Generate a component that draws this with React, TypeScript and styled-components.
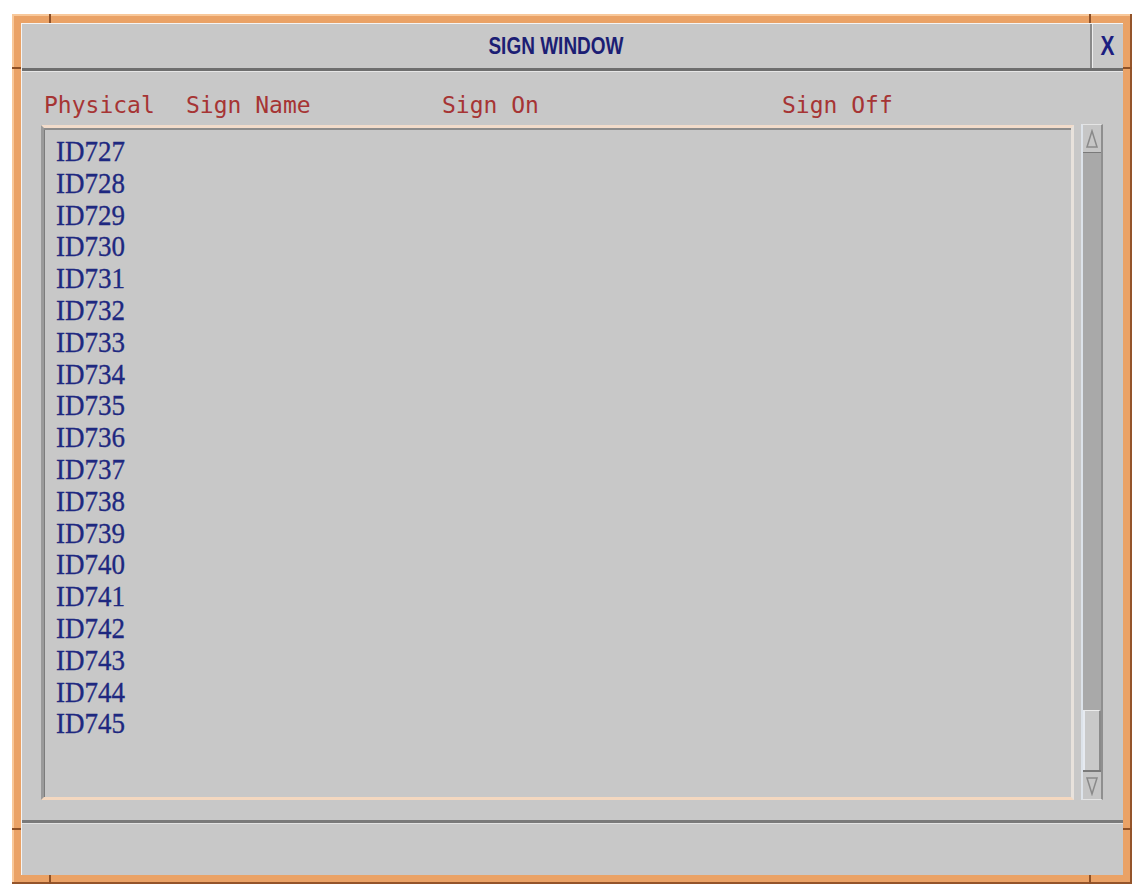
import React from "react";
import styled, { createGlobalStyle } from "styled-components";

const GlobalStyle = createGlobalStyle`
  html, body { margin: 0; padding: 0; background: #ffffff; }
  body { font-family: "Liberation Sans", Arial, sans-serif; }
`;

const Page = styled.div`
  padding: 14px 0 0 12px;
`;

const Frame = styled.div`
  position: relative;
  box-sizing: border-box;
  width: 1120px;
  height: 870px;
  background: #eaa266;
  padding: 9px;
  box-shadow: inset -2px -2px 0 #94542a, inset 2px 2px 0 #f8c89a;
`;

const Tick = styled.div<{ $x?: number; $y?: number; $vertical?: boolean }>`
  position: absolute;
  background: #8e5026;
  ${(p) =>
    p.$vertical
      ? `width: 2px; height: 9px; left: ${p.$x}px; top: ${p.$y}px;`
      : `width: 9px; height: 2px; left: ${p.$x}px; top: ${p.$y}px;`}
`;

const Window = styled.div`
  box-sizing: border-box;
  height: 100%;
  display: flex;
  flex-direction: column;
  background: #c8c8c8;
  border-left: 1px solid #f4f4f4;
  border-top: 1px solid #f4f4f4;
`;

const TitleBar = styled.div`
  display: flex;
  height: 44px;
  border-bottom: 3px solid #6e6e6e;
  box-shadow: 0 1px 0 #e6e6e6;
`;

const Title = styled.div`
  flex: 1;
  display: flex;
  align-items: center;
  justify-content: center;
  font-family: "Liberation Sans", Arial, sans-serif;
  font-weight: bold;
  font-size: 19px;
  color: #1c1e74;
  span { display: inline-block; transform: scaleY(1.3); }
`;

const CloseButton = styled.div`
  width: 31px;
  display: flex;
  align-items: center;
  justify-content: center;
  border-left: 2px solid #8a8a8a;
  box-shadow: inset 1px 0 0 #eeeeee;
  font-family: "Liberation Sans", Arial, sans-serif;
  font-weight: bold;
  font-size: 21px;
  color: #1c1e80;
  span { display: inline-block; transform: scaleY(1.3); }
`;

const Body = styled.div`
  flex: 1;
  display: flex;
  flex-direction: column;
  padding: 0 20px 20px 19px;
`;

const HeaderRow = styled.div`
  display: grid;
  grid-template-columns: 142px 256px 340px 1fr;
  align-items: center;
  height: 40px;
  padding: 14px 0 0 3px;
  font-family: "DejaVu Sans Mono", "Liberation Mono", monospace;
  font-size: 23px;
  color: #a63434;
`;

const HeaderCell = styled.div`
  white-space: pre;
`;

const ListArea = styled.div`
  flex: 1;
  display: flex;
  gap: 7px;
`;

const ListBox = styled.div`
  flex: 1;
  box-sizing: border-box;
  border-top: 3px solid #f2dccb;
  border-left: 3px solid #9a9a9a;
  border-right: 3px solid #e8e2dc;
  border-bottom: 3px solid #f4d8c0;
  box-shadow: inset 0 2px 0 #8c8c8c, inset 1px 0 0 #7c7c7c;
  padding: 8px 0 0 12px;
`;

const Row = styled.div`
  height: 31.8px;
  line-height: 31.8px;
  font-family: "Liberation Serif", "Times New Roman", serif;
  font-size: 27px;
  color: #1e2880;
  -webkit-text-stroke: 0.3px #1e2880;
  span { display: inline-block; transform: scaleY(1.1); transform-origin: center; }
`;

const ScrollBar = styled.div`
  width: 22px;
  display: flex;
  flex-direction: column;
  box-sizing: border-box;
  border-left: 2px solid #dde3ea;
  border-right: 2px solid #8f8f8f;
  border-top: 1px solid #e4e4e4;
  border-bottom: 1px solid #e4e4e4;
  background: #a9a9a9;
  margin-top: -1px;
`;

const Arrow = styled.div`
  height: 27px;
  background: #c6c6c6;
  display: flex;
  align-items: center;
  justify-content: center;
  border-bottom: 1px solid #7a7a7a;
  &:last-child { border-bottom: none; border-top: 2px solid #7a7a7a; }
`;

const Trough = styled.div`
  flex: 1;
  display: flex;
  flex-direction: column;
  justify-content: flex-end;
`;

const Thumb = styled.div`
  height: 60px;
  background: #c9c9c9;
  border-left: 2px solid #e6eaf0;
  border-top: 1px solid #ececec;
  border-right: 2px solid #8a8a8a;
  box-sizing: border-box;
`;

const StatusBar = styled.div`
  height: 52px;
  border-top: 3px solid #7a7a7a;
  box-shadow: inset 0 1px 0 #e2e2e2;
`;

const rows = Array.from({ length: 19 }, (_, i) => `ID${727 + i}`);

const ArrowIcon = ({ up }: { up?: boolean }) => (
  <svg width="14" height="20" viewBox="0 0 14 20">
    {up ? (
      <polygon points="7,2 12,18 2,18" fill="none" stroke="#8a8a8a" strokeWidth="1.5" />
    ) : (
      <polygon points="2,2 12,2 7,18" fill="none" stroke="#8a8a8a" strokeWidth="1.5" />
    )}
  </svg>
);

export default function App() {
  return (
    <>
      <GlobalStyle />
      <Page>
        <Frame>
          <Tick $vertical $x={37} $y={0} />
          <Tick $vertical $x={1077} $y={0} />
          <Tick $vertical $x={37} $y={861} />
          <Tick $vertical $x={1077} $y={861} />
          <Tick $x={0} $y={53} />
          <Tick $x={1111} $y={53} />
          <Tick $x={0} $y={814} />
          <Tick $x={1111} $y={814} />
          <Window>
            <TitleBar>
              <Title>
                <span>SIGN WINDOW</span>
              </Title>
              <CloseButton>
                <span>X</span>
              </CloseButton>
            </TitleBar>
            <Body>
              <HeaderRow>
                <HeaderCell>Physical</HeaderCell>
                <HeaderCell>Sign Name</HeaderCell>
                <HeaderCell>Sign On</HeaderCell>
                <HeaderCell>Sign Off</HeaderCell>
              </HeaderRow>
              <ListArea>
                <ListBox>
                  {rows.map((r) => (
                    <Row key={r}>
                      <span>{r}</span>
                    </Row>
                  ))}
                </ListBox>
                <ScrollBar>
                  <Arrow>
                    <ArrowIcon up />
                  </Arrow>
                  <Trough>
                    <Thumb />
                  </Trough>
                  <Arrow>
                    <ArrowIcon />
                  </Arrow>
                </ScrollBar>
              </ListArea>
            </Body>
            <StatusBar />
          </Window>
        </Frame>
      </Page>
    </>
  );
}
